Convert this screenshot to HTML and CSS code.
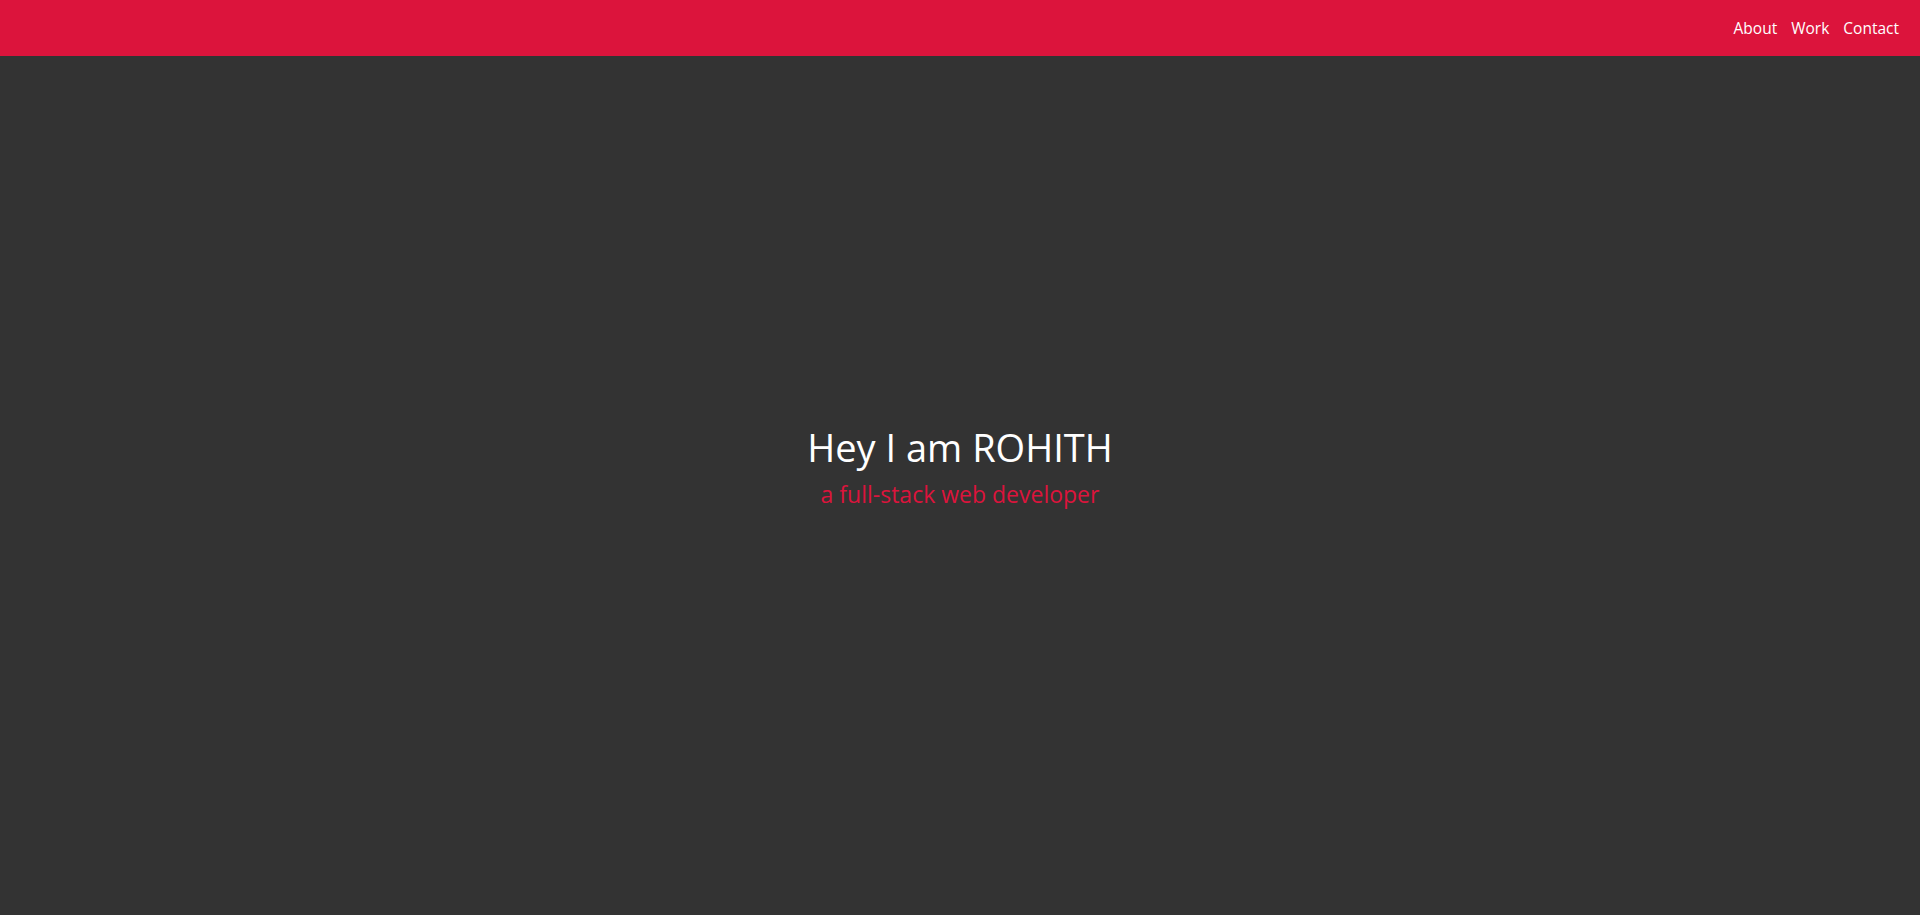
FILE: index.html
```html
<!DOCTYPE html>
<html lang="en">
<head>
<meta charset="utf-8">
<title>Rohith</title>
<link rel="stylesheet" href="styles.css">
</head>
<body>
<header class="topbar">
  <nav class="nav">
    <a href="#about" class="nav-link">About</a>
    <a href="#work" class="nav-link">Work</a>
    <a href="#contact" class="nav-link">Contact</a>
  </nav>
</header>
<main class="hero">
  <h1 class="hero-title">Hey I am ROHITH</h1>
  <p class="hero-sub">a full-stack web developer</p>
</main>
</body>
</html>
```
FILE: styles.css
```css
* { box-sizing: border-box; }
html, body { margin: 0; height: 100%; }
body {
  background: #333333;
  font-family: "Open Sans", "Noto Sans", sans-serif;
  color: #fff;
  display: flex;
  flex-direction: column;
}
.topbar {
  height: 56px;
  background: #dc143c;
  display: flex;
  justify-content: flex-end;
  align-items: center;
  padding-right: 21px;
  flex-shrink: 0;
}
.nav { display: flex; gap: 14px; }
.nav-link {
  color: #fff;
  text-decoration: none;
  font-size: 15.5px;
}
.hero {
  flex: 1;
  display: flex;
  flex-direction: column;
  align-items: center;
  justify-content: center;
  padding-bottom: 36px;
}
.hero-title {
  margin: 0;
  font-weight: 400;
  font-size: 38px;
  line-height: 1.2;
}
.hero-sub {
  margin: 9px 0 0;
  color: #dc143c;
  font-size: 23px;
  line-height: 1.3;
}
```
